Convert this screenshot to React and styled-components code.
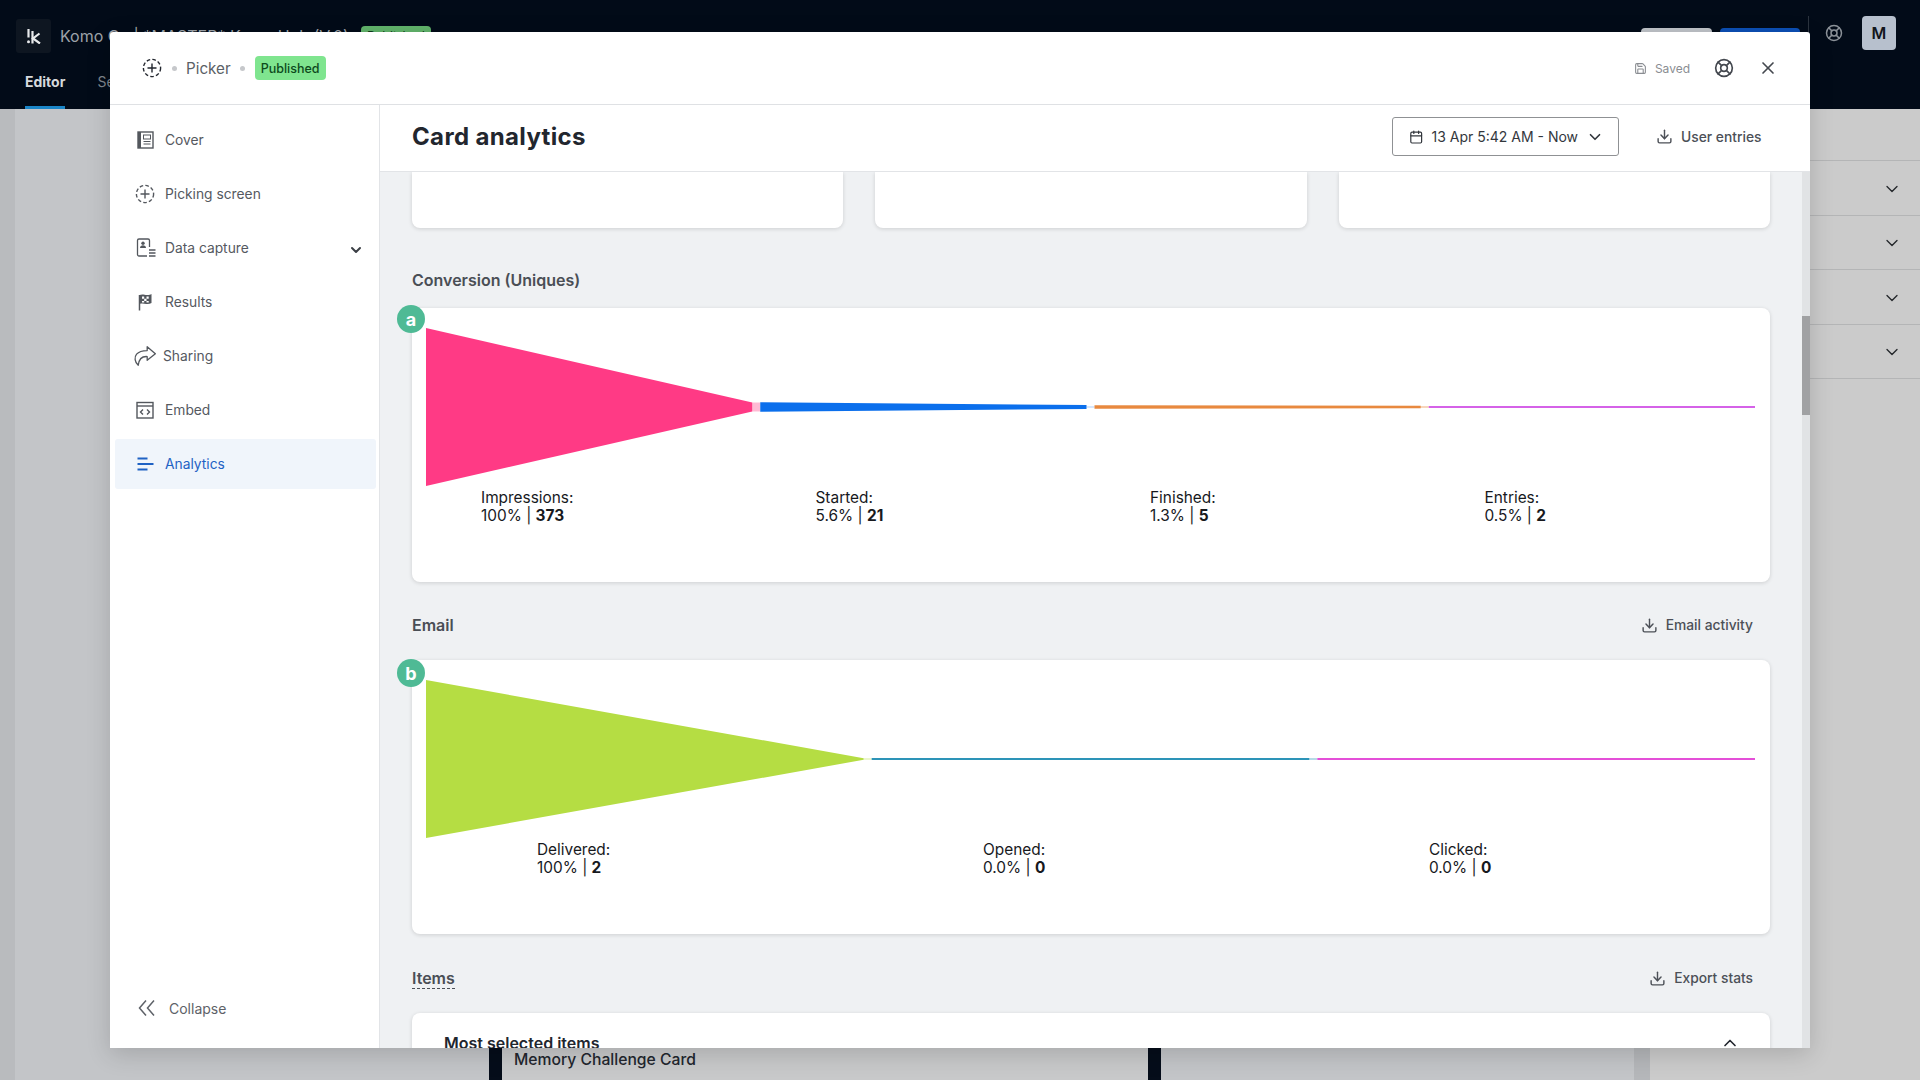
import React from 'react';
import styled, { createGlobalStyle } from 'styled-components';
import {
  Calendar,
  ChevronDown,
  ChevronUp,
  Download,
  LifeBuoy,
  Save,
  X,
} from 'lucide-react';

const GlobalStyle = createGlobalStyle`
  html, body, #root {
    margin: 0;
    width: 100%;
    height: 100%;
    overflow: hidden;
  }
  body {
    font-family: Inter, 'Liberation Sans', sans-serif;
    color: #22262e;
  }
  * {
    box-sizing: border-box;
  }
`;

const Page = styled.div`
  position: relative;
  display: flex;
  flex-direction: column;
  width: 1920px;
  height: 1080px;
  overflow: hidden;
  background: #c3c5c8;
`;

/* app chrome behind the dialog */
const TopBar = styled.header`
  display: flex;
  flex-direction: column;
  height: 109px;
  flex-shrink: 0;
  background: #020b18;
`;

const TopRow = styled.div`
  display: flex;
  align-items: center;
  height: 70px;
  padding: 2px 24px 0 16px;
`;

const LogoBox = styled.div`
  display: flex;
  align-items: center;
  justify-content: center;
  width: 35px;
  height: 34px;
  margin-right: 9px;
  border-radius: 3px;
  background: #0e1621;
  color: #e8eaec;
`;

const CardName = styled.span`
  color: #9da2a8;
  font-size: 16px;
`;

const TopBadge = styled.span`
  display: flex;
  justify-content: center;
  width: 70px;
  margin-left: 12px;
  padding: 3px 0;
  border-radius: 4px;
  background: #61b36b;
  color: #0d3a18;
  font-size: 12.5px;
`;

const TopRight = styled.div`
  display: flex;
  align-items: flex-start;
  margin-left: auto;
  gap: 8px;
`;

const TopNote = styled.span`
  margin: 13.5px 13px 0 0;
  color: #9da2a8;
  font-size: 14px;
`;

const TopButton = styled.span`
  display: flex;
  align-items: center;
  justify-content: center;
  width: ${({ $width }) => $width}px;
  height: 28px;
  margin-top: 12px;
  border-radius: 4px;
  background: ${({ $primary }) => ($primary ? '#0c4fb5' : '#bfc3c8')};
  color: ${({ $primary }) => ($primary ? '#fff' : '#1d2128')};
  font-size: 14px;
`;

const TopDivider = styled.span`
  width: 1px;
  height: 34px;
  background: #2b333e;
`;

const TopHelp = styled.span`
  display: flex;
  margin: 8px 11px 0 8px;
  color: #8b9198;
`;

const Avatar = styled.div`
  display: flex;
  align-items: center;
  justify-content: center;
  width: 34px;
  height: 34px;
  border-radius: 4px;
  background: #b7c0cd;
  color: #12161c;
  font-size: 16px;
  font-weight: 600;
`;

const TabRow = styled.nav`
  display: flex;
  gap: 32px;
  flex: 1;
  padding-left: 25px;
`;

const Tab = styled.span`
  height: 39px;
  padding-top: 3px;
  border-bottom: ${({ $active }) => ($active ? '3px solid #1b86c8' : 'none')};
  color: ${({ $active }) => ($active ? '#d6d9dc' : '#7f858c')};
  font-size: 14px;
  font-weight: ${({ $active }) => ($active ? 700 : 400)};
`;

const Workspace = styled.div`
  display: flex;
  flex: 1;
  min-height: 0;
`;

const LeftRail = styled.div`
  width: 15px;
  background: #b9bbbe;
`;

const Canvas = styled.main`
  display: flex;
  align-items: flex-end;
  flex: 1;
  padding-left: 474px;
`;

const StageFrame = styled.div`
  display: flex;
  align-items: flex-end;
  width: 672px;
  height: 120px;
  padding: 0 0 11px 12px;
  border-left: 13px solid #050d1a;
  border-right: 13px solid #050d1a;
  background: #c8c9ca;
  font-size: 15.7px;
  font-weight: 500;
`;

const CanvasRail = styled.div`
  width: 16px;
  background: #b5b7ba;
`;

const SidePanel = styled.aside`
  width: 270px;
  padding-top: 51px;
  background: #cbcbcb;
`;

const SideRow = styled.div`
  display: flex;
  align-items: center;
  justify-content: flex-end;
  height: 54.5px;
  padding: 2px 18px 0 0;
  border-top: 1px solid #b4b5b6;
  color: #24272b;

  &:last-child {
    height: 1px;
  }
`;

/* dialog */
const Dialog = styled.section`
  position: absolute;
  top: 32px;
  left: 110px;
  display: flex;
  flex-direction: column;
  width: 1700px;
  height: 1016px;
  background: #fff;
  border-radius: 3px 3px 0 0;
  box-shadow: 0 6px 24px rgba(0, 0, 0, 0.16);
  overflow: hidden;
`;

const DialogHeader = styled.div`
  display: flex;
  align-items: center;
  height: 73px;
  flex-shrink: 0;
  padding: 0 32px;
  border-bottom: 1px solid #dfe1e4;
`;

const Crumb = styled.span`
  color: #5b5f66;
  font-size: 15.2px;
`;

const CrumbDot = styled.span`
  width: 5px;
  height: 5px;
  margin: 0 9.5px;
  border-radius: 50%;
  background: #c6c8cb;
`;

const StatusBadge = styled.span`
  display: flex;
  align-items: center;
  height: 24px;
  padding: 0 6px;
  border-radius: 4px;
  background: #7fe58f;
  color: #0d4a1c;
  font-size: 12.5px;
  font-weight: 500;
`;

const HeaderActions = styled.div`
  display: flex;
  align-items: center;
  margin-left: auto;
  color: #44484f;
`;

const SavedNote = styled.span`
  display: flex;
  align-items: center;
  gap: 8px;
  margin-right: 24px;
  color: #8a8d92;
  font-size: 12px;
`;

const HeaderIcon = styled.span`
  display: flex;
  margin-left: ${({ $gap }) => $gap || 0}px;
`;

const DialogBody = styled.div`
  display: flex;
  flex: 1;
  min-height: 0;
`;

const Sidebar = styled.nav`
  display: flex;
  flex-direction: column;
  width: 270px;
  flex-shrink: 0;
  padding: 10px 3px 0 5px;
  border-right: 1px solid #e2e4e7;
`;

const NavItem = styled.div`
  display: flex;
  align-items: center;
  height: 50px;
  margin-bottom: 4px;
  padding-left: 20px;
  border-radius: 3px;
  background: ${({ $active }) => ($active ? '#f0f5fb' : 'transparent')};
  color: ${({ $active }) => ($active ? '#1f62c4' : '#55595f')};
  font-size: 13.8px;
`;

const NavIcon = styled.span`
  display: flex;
  align-items: center;
  width: 30px;
  height: 24px;
  margin-left: ${({ $nudge }) => $nudge || 0}px;
  color: ${({ $active }) => ($active ? '#1f62c4' : '#53575d')};
`;

const NavChevron = styled.span`
  display: flex;
  margin: 3px 12px 0 auto;
  color: #3b3f45;
`;

const CollapseRow = styled.div`
  display: flex;
  align-items: center;
  gap: 13px;
  height: 24px;
  margin: auto 0 28px 23px;
  color: #5e6268;
  font-size: 14px;
`;

const Content = styled.div`
  display: flex;
  flex-direction: column;
  flex: 1;
  min-width: 0;
`;

const ContentHeader = styled.div`
  display: flex;
  align-items: center;
  height: 67px;
  flex-shrink: 0;
  padding: 0 48.5px 3px 32px;
  border-bottom: 1px solid #e2e4e7;
`;

const PageTitle = styled.h1`
  margin: 0;
  color: #22262e;
  font-size: 24px;
  font-weight: 700;
  letter-spacing: 0.35px;
`;

const DateButton = styled.button`
  display: flex;
  align-items: center;
  width: 227px;
  height: 39px;
  margin-left: auto;
  padding: 0 14px 0 16px;
  border: 1px solid #8f9194;
  border-radius: 3px;
  background: #fff;
  color: #33373d;
  font-family: inherit;
  font-size: 14px;
`;

const DateLabel = styled.span`
  margin: 0 8px 0 8px;
  white-space: nowrap;
`;

const LinkButton = styled.span`
  display: flex;
  align-items: center;
  gap: 8px;
  margin-left: ${({ $offset }) => $offset || 0}px;
  padding-right: ${({ $inset }) => $inset || 0}px;
  color: #4c5057;
  font-size: 13.8px;
  font-weight: 500;
`;

const ScrollArea = styled.div`
  position: relative;
  flex: 1;
  min-height: 0;
  padding: 0 40px 0 32px;
  background: #eff1f3;
  overflow: hidden;
`;

const ScrollTrack = styled.div`
  position: absolute;
  top: 0;
  right: 0;
  bottom: 0;
  width: 8px;
  background: #e1e3e5;
`;

const ScrollThumb = styled.div`
  position: absolute;
  top: 144px;
  left: 0;
  width: 8px;
  height: 99px;
  background: #a0a1a3;
`;

const SummaryRow = styled.div`
  display: grid;
  grid-template-columns: repeat(3, 1fr);
  gap: 32px;
  height: 56px;
`;

const SummaryCard = styled.div`
  border-radius: 0 0 8px 8px;
  background: #fff;
  box-shadow: 0 1px 4px rgba(0, 0, 0, 0.14);
`;

const SectionHeader = styled.div`
  display: flex;
  align-items: center;
  justify-content: space-between;
  height: 36px;
  margin: ${({ $top }) => $top}px 0 ${({ $bottom }) => $bottom || 17}px;
`;

const SectionTitle = styled.h2`
  margin: 0;
  color: #4a4e55;
  font-size: 16px;
  font-weight: 600;
  border-bottom: ${({ $dashed }) => ($dashed ? '1px dashed #4a4e55' : 'none')};
`;

const ChartCard = styled.div`
  position: relative;
  height: 274px;
  padding: 20px 6px 0 14px;
  border-radius: 8px;
  background: #fff;
  box-shadow: 0 1px 4px rgba(0, 0, 0, 0.14);
`;

const ChartBadge = styled.span`
  position: absolute;
  top: ${({ $top }) => $top}px;
  left: -15px;
  display: flex;
  align-items: center;
  justify-content: center;
  width: 28px;
  height: 28px;
  border-radius: 50%;
  background: #4fba95;
  color: #fff;
  font-size: 18px;
  font-weight: 700;
`;

const FunnelSvg = styled.svg`
  display: block;
`;

const FunnelLabels = styled.div`
  display: grid;
  grid-template-columns: repeat(${({ $count }) => $count}, 1fr);
  margin-top: 3px;
`;

const FunnelLabel = styled.div`
  padding-left: ${({ $inset }) => $inset}px;
  color: #17191d;
  font-size: 15.4px;
  line-height: 18px;

  b {
    font-weight: 700;
  }
`;

const ListCard = styled.div`
  display: flex;
  justify-content: space-between;
  height: 120px;
  padding: 20px 30px 0 32px;
  border-radius: 8px 8px 0 0;
  background: #fff;
  box-shadow: 0 1px 4px rgba(0, 0, 0, 0.14);
`;

const ListTitle = styled.h3`
  margin: 0;
  color: #22262e;
  font-size: 16px;
  font-weight: 600;
`;

const KomoLogo = () => (
  <svg width="14" height="16" viewBox="0 0 14 16" fill="none" stroke="currentColor" strokeWidth="2.2">
    <path d="M1.5 1v8.5" />
    <circle cx="1.5" cy="13.8" r="1.5" fill="currentColor" stroke="none" />
    <path d="M5.5 3v12.5" />
    <path d="M12.5 5.5 6 10.5l7 5" />
  </svg>
);

const PickerIcon = ({ size = 20 }) => (
  <svg width={size} height={size} viewBox="0 0 20 20" fill="none" stroke="currentColor" strokeWidth="1.4">
    <circle cx="10" cy="10" r="8.6" strokeDasharray="3.6 2.2" />
    <path d="M10 5.5v9M5.5 10h9" />
  </svg>
);

const CoverIcon = () => (
  <svg width="20" height="20" viewBox="0 0 20 20" fill="none" stroke="currentColor">
    <rect x="3" y="2" width="15" height="16" strokeWidth="1.4" />
    <rect x="3" y="2" width="3" height="16" fill="currentColor" stroke="none" />
    <rect x="8.5" y="5" width="7" height="4" strokeWidth="1" />
    <path d="M8.5 11.5h7M8.5 14h7" strokeWidth="1" />
  </svg>
);

const CaptureIcon = () => (
  <svg width="22" height="22" viewBox="0 0 22 22" fill="none" stroke="currentColor" strokeWidth="1.3">
    <path d="M12 19H4a1.5 1.5 0 0 1-1.5-1.5v-14A1.5 1.5 0 0 1 4 2h9a1.5 1.5 0 0 1 1.5 1.5V10" />
    <circle cx="8" cy="6.2" r="1.7" fill="currentColor" stroke="none" />
    <path d="M5 11c0-2 1.4-2.8 3-2.8s3 .8 3 2.8z" fill="currentColor" stroke="none" />
    <path d="M14 13h6.5M14 16h6.5M14 19h6.5" strokeWidth="1.5" />
  </svg>
);

const FlagIcon = () => (
  <svg width="20" height="20" viewBox="0 0 20 20" fill="none">
    <path d="M4.5 18.5V3" stroke="currentColor" strokeWidth="1.5" />
    <path d="M4.5 3c3-1.4 5 0 7.5 0s3.2-.4 4.5-1v9c-1.5.8-3 1.2-5 1-2.2-.2-4.5-.8-7 0z" fill="currentColor" />
    <path d="M7 4.5h2.2v2.2H7zM11.5 4.5h2.2v2.2h-2.2zM9.2 6.7h2.3v2.2H9.2zM7 8.9h2.2v1.6H7zM11.5 8.9h2.2v1.6h-2.2z" fill="#fff" />
  </svg>
);

const ShareIcon = () => (
  <svg width="24" height="24" viewBox="0 0 22 22" fill="none" stroke="currentColor" strokeWidth="1.2" strokeLinejoin="round">
    <path d="M13 2.5 20.5 9 13 15v-3.5C8.5 11.2 5.5 13 4.8 19.5 1.5 16.5 1 12 3.3 9.3 5.4 6.8 9 6 13 6z" />
  </svg>
);

const EmbedIcon = () => (
  <svg width="20" height="20" viewBox="0 0 20 20" fill="none" stroke="currentColor" strokeWidth="1.4">
    <rect x="2" y="2.5" width="16" height="15.5" />
    <path d="M2 6h16" />
    <path d="M8 9.5 5.5 12 8 14.5M12 9.5l2.5 2.5-2.5 2.5" />
  </svg>
);

const AnalyticsIcon = () => (
  <svg width="20" height="20" viewBox="0 0 20 20" fill="none" stroke="currentColor" strokeWidth="1.8">
    <path d="M2.5 4.5h10M2.5 10h16M2.5 15.5h10" />
  </svg>
);

const CollapseIcon = () => (
  <svg width="18" height="18" viewBox="0 0 18 18" fill="none" stroke="currentColor" strokeWidth="1.5">
    <path d="M8 1.5 1.5 9 8 16.5M16 1.5 9.5 9 16 16.5" />
  </svg>
);

const NAV_ITEMS = [
  { label: 'Cover', icon: <CoverIcon /> },
  { label: 'Picking screen', icon: <PickerIcon /> },
  { label: 'Data capture', icon: <CaptureIcon />, expandable: true },
  { label: 'Results', icon: <FlagIcon /> },
  { label: 'Sharing', icon: <ShareIcon />, nudge: -2 },
  { label: 'Embed', icon: <EmbedIcon /> },
  { label: 'Analytics', icon: <AnalyticsIcon />, active: true },
];

const FUNNEL_WIDTH = 1329;
const FUNNEL_HEIGHT = 158;
const FUNNEL_GAP = 8;

const CONVERSION_STAGES = [
  { label: 'Impressions:', share: '100%', count: 373, color: '#ff3a85', from: 158, to: 9, link: 9 },
  { label: 'Started:', share: '5.6%', count: 21, color: '#0b6fec', from: 9.5, to: 4, link: 1 },
  { label: 'Finished:', share: '1.3%', count: 5, color: '#e8893f', from: 3.5, to: 2.5, link: 2 },
  { label: 'Entries:', share: '0.5%', count: 2, color: '#d562e8', from: 2.2, to: 2 },
];

const EMAIL_STAGES = [
  { label: 'Delivered:', share: '100%', count: 2, color: '#b5dd43', from: 158, to: 1.5, link: 1.5 },
  { label: 'Opened:', share: '0.0%', count: 0, color: '#2d94b8', from: 2, to: 2, link: 2 },
  { label: 'Clicked:', share: '0.0%', count: 0, color: '#e44fd8', from: 2, to: 2 },
];

function Funnel({ stages, inset }) {
  const stageWidth = (FUNNEL_WIDTH - FUNNEL_GAP * (stages.length - 1)) / stages.length;
  const mid = FUNNEL_HEIGHT / 2;

  return (
    <>
      <FunnelSvg width={FUNNEL_WIDTH} height={FUNNEL_HEIGHT} viewBox={`0 0 ${FUNNEL_WIDTH} ${FUNNEL_HEIGHT}`}>
        {stages.map((stage, i) => {
          const x = i * (stageWidth + FUNNEL_GAP);
          const end = x + stageWidth;
          return (
            <g key={stage.label}>
              <polygon
                fill={stage.color}
                points={`${x},${mid - stage.from / 2} ${end},${mid - stage.to / 2} ${end},${mid + stage.to / 2} ${x},${mid + stage.from / 2}`}
              />
              {stage.link && (
                <rect
                  fill={stage.color}
                  opacity="0.35"
                  x={end}
                  y={mid - stage.link / 2}
                  width={FUNNEL_GAP}
                  height={stage.link}
                />
              )}
            </g>
          );
        })}
      </FunnelSvg>
      <FunnelLabels $count={stages.length}>
        {stages.map(stage => (
          <FunnelLabel key={stage.label} $inset={inset}>
            {stage.label}
            <br />
            {stage.share} | <b>{stage.count}</b>
          </FunnelLabel>
        ))}
      </FunnelLabels>
    </>
  );
}

export default function App() {
  return (
    <Page>
      <GlobalStyle />
      <TopBar>
        <TopRow>
          <LogoBox>
            <KomoLogo />
          </LogoBox>
          <CardName>Komo Co | *MASTER* Komo Hub (V.0)</CardName>
          <TopBadge>Published</TopBadge>
          <TopRight>
            <TopNote>Last published 2 days ago</TopNote>
            <TopButton $width={71}>Share</TopButton>
            <TopButton $width={80} $primary>
              Launch
            </TopButton>
            <TopDivider />
            <TopHelp>
              <LifeBuoy size={18} />
            </TopHelp>
            <Avatar>M</Avatar>
          </TopRight>
        </TopRow>
        <TabRow>
          <Tab $active>Editor</Tab>
          <Tab>Settings</Tab>
        </TabRow>
      </TopBar>

      <Workspace>
        <LeftRail />
        <Canvas>
          <StageFrame>Memory Challenge Card</StageFrame>
        </Canvas>
        <CanvasRail />
        <SidePanel>
          {[0, 1, 2, 3].map(row => (
            <SideRow key={row}>
              <ChevronDown size={20} strokeWidth={1.6} />
            </SideRow>
          ))}
          <SideRow />
        </SidePanel>
      </Workspace>

      <Dialog>
        <DialogHeader>
          <PickerIcon />
          <CrumbDot />
          <Crumb>Picker</Crumb>
          <CrumbDot />
          <StatusBadge>Published</StatusBadge>
          <HeaderActions>
            <SavedNote>
              <Save size={13} />
              Saved
            </SavedNote>
            <LifeBuoy size={20} />
            <HeaderIcon $gap={24}>
              <X size={20} />
            </HeaderIcon>
          </HeaderActions>
        </DialogHeader>

        <DialogBody>
          <Sidebar>
            {NAV_ITEMS.map(item => (
              <NavItem key={item.label} $active={item.active}>
                <NavIcon $active={item.active} $nudge={item.nudge}>
                  {item.icon}
                </NavIcon>
                {item.label}
                {item.expandable && (
                  <NavChevron>
                    <ChevronDown size={16} strokeWidth={3} />
                  </NavChevron>
                )}
              </NavItem>
            ))}
            <CollapseRow>
              <CollapseIcon />
              Collapse
            </CollapseRow>
          </Sidebar>

          <Content>
            <ContentHeader>
              <PageTitle>Card analytics</PageTitle>
              <DateButton>
                <Calendar size={16} />
                <DateLabel>13 Apr 5:42 AM - Now</DateLabel>
                <ChevronDown size={20} strokeWidth={2.2} />
              </DateButton>
              <LinkButton $offset={37}>
                <Download size={17} />
                User entries
              </LinkButton>
            </ContentHeader>

            <ScrollArea>
              <SummaryRow>
                <SummaryCard />
                <SummaryCard />
                <SummaryCard />
              </SummaryRow>

              <SectionHeader $top={34} $bottom={10}>
                <SectionTitle>Conversion (Uniques)</SectionTitle>
              </SectionHeader>
              <ChartCard>
                <ChartBadge $top={-3}>a</ChartBadge>
                <Funnel stages={CONVERSION_STAGES} inset={55} />
              </ChartCard>

              <SectionHeader $top={25}>
                <SectionTitle>Email</SectionTitle>
                <LinkButton $inset={17}>
                  <Download size={17} />
                  Email activity
                </LinkButton>
              </SectionHeader>
              <ChartCard>
                <ChartBadge $top={-1}>b</ChartBadge>
                <Funnel stages={EMAIL_STAGES} inset={111} />
              </ChartCard>

              <SectionHeader $top={26}>
                <SectionTitle $dashed>Items</SectionTitle>
                <LinkButton $inset={17}>
                  <Download size={17} />
                  Export stats
                </LinkButton>
              </SectionHeader>
              <ListCard>
                <ListTitle>Most selected items</ListTitle>
                <ChevronUp size={20} />
              </ListCard>

              <ScrollTrack>
                <ScrollThumb />
              </ScrollTrack>
            </ScrollArea>
          </Content>
        </DialogBody>
      </Dialog>
    </Page>
  );
}
